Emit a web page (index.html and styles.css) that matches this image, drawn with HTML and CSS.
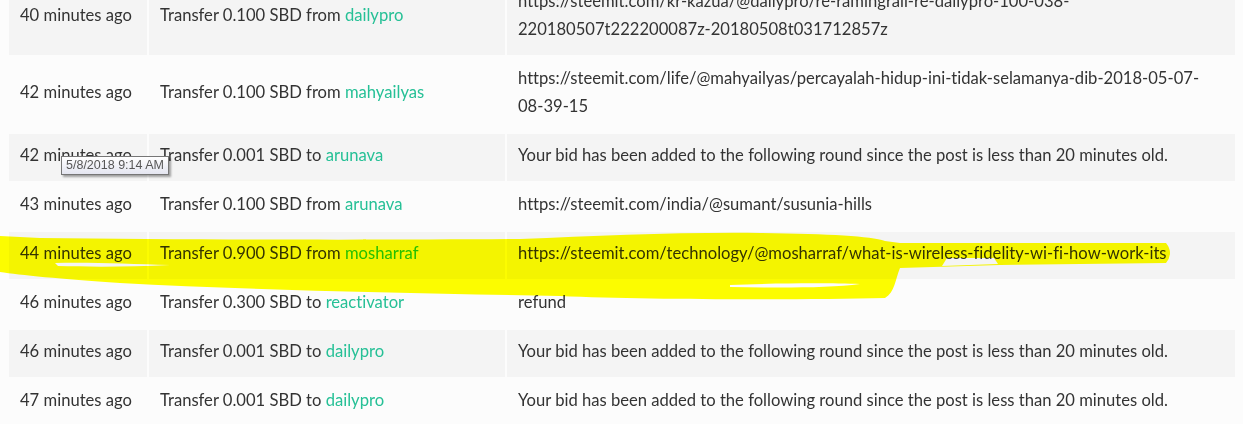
FILE: index.html
```html
<!DOCTYPE html>
<html>
<head>
<meta charset="utf-8">
<link rel="stylesheet" href="styles.css">
</head>
<body>
<div class="page">
  <table class="history">
    <colgroup>
      <col class="c-time"><col class="c-op"><col class="c-memo">
    </colgroup>
    <tbody>
      <tr><td>40 minutes ago</td><td>Transfer 0.100 SBD from <a href="#">dailypro</a></td><td>https://steemit.com/kr-kazua/@dailypro/re-ramingrall-re-dailypro-100-038-220180507t222200087z-20180508t031712857z</td></tr>
      <tr><td>42 minutes ago</td><td>Transfer 0.100 SBD from <a href="#">mahyailyas</a></td><td>https://steemit.com/life/@mahyailyas/percayalah-hidup-ini-tidak-selamanya-dib-2018-05-07-08-39-15</td></tr>
      <tr><td>42 minutes ago</td><td>Transfer 0.001 SBD to <a href="#">arunava</a></td><td>Your bid has been added to the following round since the post is less than 20 minutes old.</td></tr>
      <tr><td>43 minutes ago</td><td>Transfer 0.100 SBD from <a href="#">arunava</a></td><td>https://steemit.com/india/@sumant/susunia-hills</td></tr>
      <tr><td>44 minutes ago</td><td>Transfer 0.900 SBD from <a href="#">mosharraf</a></td><td>https://steemit.com/technology/@mosharraf/what-is-wireless-fidelity-wi-fi-how-work-its</td></tr>
      <tr><td>46 minutes ago</td><td>Transfer 0.300 SBD to <a href="#">reactivator</a></td><td>refund</td></tr>
      <tr><td>46 minutes ago</td><td>Transfer 0.001 SBD to <a href="#">dailypro</a></td><td>Your bid has been added to the following round since the post is less than 20 minutes old.</td></tr>
      <tr><td>47 minutes ago</td><td>Transfer 0.001 SBD to <a href="#">dailypro</a></td><td>Your bid has been added to the following round since the post is less than 20 minutes old.</td></tr>
    </tbody>
  </table>

  <svg class="marker" width="1243" height="424" viewBox="0 0 1243 424">
    <path fill="#ffff00" d="M0,236 L40,238 C200,240 400,240 520,239 C600,236 680,232 760,233 C830,234 870,236 885,241 L900,243 L1120,243 L1166,243 Q1174,253 1166,263 L1000,265 L900,268 C895,280 895,292 885,298 C800,300 650,300 560,296 C400,293 250,290 120,283 C60,279 20,275 0,272 Z"/>
    <path fill="#ffffff" d="M55,263 C90,262 130,264 170,265 C130,267 90,267 58,266 Z"/>
    <path fill="#ffffff" d="M730,285 C780,283 830,283 860,284 C830,288 780,288 730,287 Z"/>
    <path fill="#ffffff" d="M942,266 L947,258 L994,258 L998,264 Z"/>
  </svg>

  <div class="tooltip">5/8/2018 9:14 AM</div>
</div>
</body>
</html>
```
FILE: styles.css
```css
html, body {
  margin: 0;
  padding: 0;
  background: #fcfcfc;
  overflow: hidden;
}

.page {
  position: relative;
  width: 1243px;
  height: 424px;
  overflow: hidden;
  padding-left: 7px;
  box-sizing: border-box;
}

.history {
  margin-top: -22px;
  width: 1230px;
  table-layout: fixed;
  border-collapse: separate;
  border-spacing: 2px;
  font-family: "Lato", "Liberation Sans", sans-serif;
  font-size: 16.6px;
  font-variant-ligatures: none;
  line-height: 28px;
  color: #333333;
}

.c-time { width: 138px; }
.c-op { width: 356px; }
.c-memo { width: 728px; }

.history td {
  padding: 7px 11px 12px;
  vertical-align: middle;
  word-wrap: break-word;
}

.history tr:nth-child(odd) td {
  background: #f4f4f4;
}

.history a {
  color: #26c096;
  text-decoration: none;
}

.marker {
  position: absolute;
  left: 0;
  top: 0;
  pointer-events: none;
  mix-blend-mode: multiply;
}

.tooltip {
  position: absolute;
  left: 61px;
  top: 156px;
  height: 19px;
  box-sizing: border-box;
  padding: 0 4px;
  border: 1px solid #767676;
  background: linear-gradient(#ffffff, #e4e5f0);
  box-shadow: 2px 2px 2px rgba(0, 0, 0, 0.35);
  font-family: "Liberation Sans", sans-serif;
  font-size: 12.5px;
  line-height: 17px;
  color: #575757;
  white-space: nowrap;
}
```
